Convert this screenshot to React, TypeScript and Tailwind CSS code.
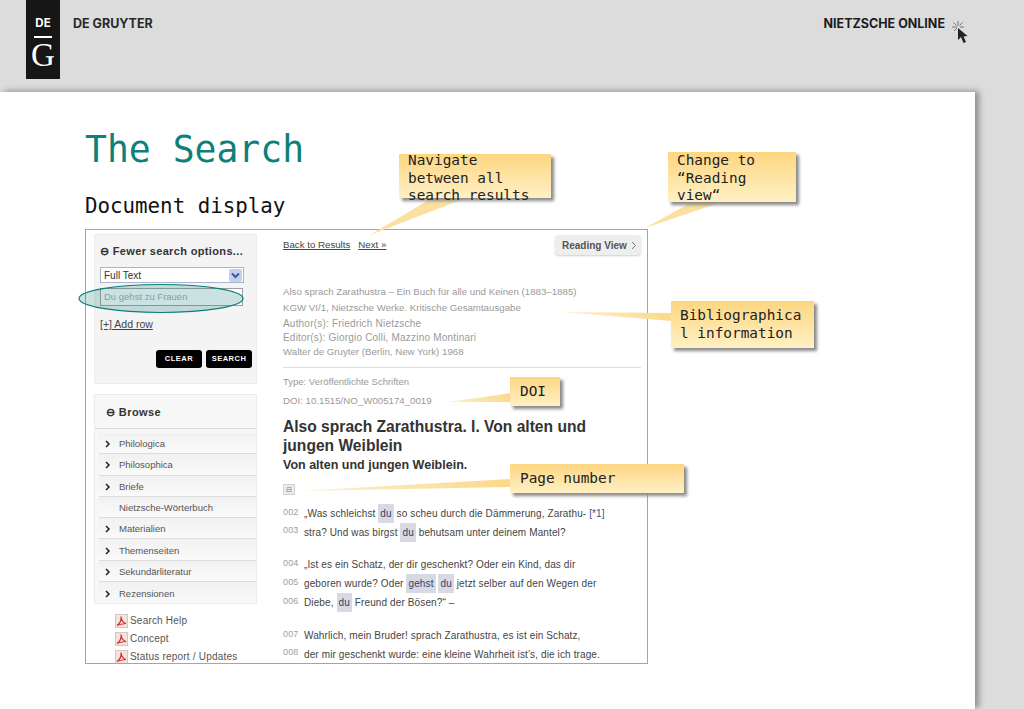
import type { ReactNode } from "react";

const browseItems = [
  { label: "Philologica", arrow: true },
  { label: "Philosophica", arrow: true },
  { label: "Briefe", arrow: true },
  { label: "Nietzsche-Wörterbuch", arrow: false },
  { label: "Materialien", arrow: true },
  { label: "Themenseiten", arrow: true },
  { label: "Sekundärliteratur", arrow: true },
  { label: "Rezensionen", arrow: true },
];

function Hit({ children }: { children: ReactNode }) {
  return <span className="inline-block h-[19px] bg-[#d9d9e4] px-[2px] leading-[19px] text-[#33406a]">{children}</span>;
}

function Line({ no, children }: { no: string; children: ReactNode }) {
  return (
    <div className="flex h-[18.8px] items-center">
      <span className="w-[21px] -translate-y-[1px] text-[9px] text-[#a0a0a0]">{no}</span>
      <span className="whitespace-nowrap">{children}</span>
    </div>
  );
}

function PdfIcon() {
  return (
    <svg width="13" height="14" viewBox="0 0 13 14" className="shrink-0">
      <rect x="0.5" y="0.5" width="12" height="13" fill="#f3e4e0" stroke="#d8c4c0" />
      <path d="M2 11.5 C5 9.5 6.5 6 6 2.5 C6.5 6 8 9 11 9.5 C8 9.5 5 10.5 2 11.5Z" fill="none" stroke="#d3332a" strokeWidth="1.2" />
    </svg>
  );
}

function Callout({ className, children }: { className: string; children: ReactNode }) {
  return (
    <div className={`absolute bg-gradient-to-b from-[#fdd680] to-[#fff0c4] font-['DejaVu_Sans_Mono',monospace] text-[14.4px] leading-[17.5px] text-[#222] shadow-[3px_3px_3px_#8a8a8a] ${className}`}>
      {children}
    </div>
  );
}

function Tail({ points }: { points: string }) {
  return <polygon points={points} fill="#fbe0a0" />;
}

export default function App() {
  return (
    <div className="relative h-[709px] w-[1024px] overflow-hidden bg-[#dcdcdc] font-['Liberation_Sans',Arial,sans-serif]">
      <header className="flex h-[92px] items-start justify-between pl-[26px] pr-[55px]">
        <div className="flex items-start">
          <div className="flex h-[79px] w-[34px] flex-col items-center bg-[#161616] pt-[17px] text-white">
            <span className="font-['Inter',sans-serif] text-[11.5px] font-bold leading-[13px]">DE</span>
            <span className="mt-[6px] h-[1.5px] w-[18px] bg-white" />
            <span className="mt-[2px] font-['Liberation_Serif',serif] text-[33px] leading-[30px]">G</span>
          </div>
          <span className="ml-[13px] mt-[16px] font-['Inter',sans-serif] text-[12.5px] font-bold leading-[16px] text-[#2a2a2a]">DE GRUYTER</span>
        </div>
        <div className="mt-[16px] flex items-start">
          <span className="font-['Inter',sans-serif] text-[12.5px] font-bold leading-[16px] text-[#1c1c1c]">NIETZSCHE ONLINE</span>
          <svg width="18" height="26" viewBox="0 0 18 26" className="ml-[6px] mt-[4px]">
            <path d="M7 1v5M1 7h5M2.5 2.5l3 3M11.500 2.500l-3 3M13 7H9M3 11l3-3" stroke="#777" strokeWidth="1" fill="none" />
            <path d="M7 8l0 12 3-3 2.500 6 2.500-1-2.500-5.500 4-.5z" fill="#222" />
          </svg>
        </div>
      </header>

      <main className="h-[617px] w-[975px] bg-white pl-[85px] pt-[38px] shadow-[4px_-1px_6px_#8f8f8f]">
        <h1 className="font-['DejaVu_Sans_Mono',monospace] text-[36.4px] font-normal leading-[40px] text-[#0e8079]">The Search</h1>
        <h2 className="mt-[24px] font-['DejaVu_Sans_Mono',monospace] text-[20.8px] leading-[24px] text-[#111]">Document display</h2>

        <section className="mt-[11px] flex h-[435px] w-[563px] gap-[26px] overflow-hidden border border-[#a5a5a5] bg-white pl-[8px] pt-[4px] text-[#444]">
          <aside className="w-[163px] shrink-0">
            <div className="h-[150px] border border-[#ececec] bg-[#f4f4f4] pl-[5px] pt-[9px]">
              <div className="text-[11px] font-bold leading-[14px] tracking-[0.35px] text-[#333]">⊖ Fewer search options...</div>
              <div className="mt-[9px] flex h-[16px] w-[144px] items-center justify-between border border-[#a8b4d0] bg-white pl-[3px] pr-[1px] text-[10px] text-[#333]">
                Full Text
                <span className="flex h-[13px] w-[13px] items-center justify-center rounded-[2px] bg-[#c3d0ee] text-[#3a5aa4]">
                  <svg width="9" height="7" viewBox="0 0 9 7"><path d="M1 1.500l3.500 3.500L8 1.500" fill="none" stroke="currentColor" strokeWidth="2" /></svg>
                </span>
              </div>
              <div className="mt-[5px] flex h-[18px] w-[143px] items-center border border-[#a0a0a0] bg-white pl-[3px] text-[9.5px] text-[#a8a8a8]">Du gehst zu Frauen</div>
              <div className="mt-[11px] text-[10.5px] leading-[14px] text-[#444] underline">[+] Add row</div>
              <div className="ml-[56px] mt-[19px] flex gap-[4px]">
                <span className="flex h-[18px] w-[46px] items-center justify-center rounded-[3px] bg-black text-[7.5px] font-bold tracking-[0.5px] text-white">CLEAR</span>
                <span className="flex h-[18px] w-[46px] items-center justify-center rounded-[3px] bg-black text-[7.5px] font-bold tracking-[0.5px] text-white">SEARCH</span>
              </div>
            </div>

            <div className="mt-[10px] h-[210px] border border-[#ececec] bg-[#f7f7f7]">
              <div className="flex h-[34px] items-center border-b border-[#d8d8d8] pl-[11px] pt-[1px] text-[11px] font-bold tracking-[0.4px] text-[#333]">⊖ Browse</div>
              <ul className="pl-[4px] pt-[4px]">
                {browseItems.map((item) => (
                  <li key={item.label} className="flex h-[21.3px] items-center border-b border-[#dcdcdc] bg-gradient-to-b from-[#f1f1f1] to-[#fafafa] pt-[2px] text-[9.5px] text-[#555] last:border-b-0">
                    <span className="w-[20px] pl-[6px]">
                      {item.arrow && (
                        <svg width="6" height="8" viewBox="0 0 6 8"><path d="M1 1l3 3-3 3" fill="none" stroke="#222" strokeWidth="1.500" /></svg>
                      )}
                    </span>
                    {item.label}
                  </li>
                ))}
              </ul>
            </div>

            <div className="ml-[21px] mt-[10px] flex flex-col gap-[4px] text-[10px] leading-[14px] tracking-[0.2px] text-[#555]">
              {["Search Help", "Concept", "Status report / Updates"].map((label) => (
                <div key={label} className="flex items-center gap-[2px]">
                  <PdfIcon />
                  {label}
                </div>
              ))}
            </div>
          </aside>

          <div className="w-[358px] shrink-0">
            <div className="flex h-[22px] items-center justify-between text-[9.7px] text-[#444]">
              <div className="flex gap-[8px] underline">
                <span>Back to Results</span>
                <span>Next »</span>
              </div>
              <span className="flex h-[20px] w-[86px] items-center justify-between rounded-[4px] bg-[#eeeeee] pl-[7px] pr-[4px] text-[10px] font-bold text-[#555] shadow-[0_1px_2px_#cfcfcf]">
                Reading View
                <svg width="6" height="9" viewBox="0 0 6 9"><path d="M1 1l3.500 3.500L1 8" fill="none" stroke="#777" /></svg>
              </span>
            </div>

            <div className="mt-[28px] text-[9.7px] text-[#9a9a9a]">
              <div className="leading-[16px]">Also sprach Zarathustra – Ein Buch für alle und Keinen (1883–1885)</div>
              <div className="leading-[16px]">KGW VI/1, Nietzsche Werke. Kritische Gesamtausgabe</div>
              <div className="mt-[1px] text-[10px] leading-[14px] tracking-[0.2px]">Author(s): Friedrich Nietzsche</div>
              <div className="text-[10px] leading-[14px] tracking-[0.2px]">Editor(s): Giorgio Colli, Mazzino Montinari</div>
              <div className="leading-[14px]">Walter de Gruyter (Berlin, New York) 1968</div>
            </div>

            <div className="mt-[8px] border-t border-[#dddddd] pt-[4px] text-[9.5px] leading-[19px] text-[#9a9a9a]">
              <div>Type: Veröffentlichte Schriften</div>
              <div className="text-[9.7px]">DOI: 10.1515/NO_W005174_0019</div>
            </div>

            <h3 className="mt-[7px] text-[15.6px] font-bold leading-[19px] text-[#333]">Also sprach Zarathustra. I. Von alten und jungen Weiblein</h3>
            <div className="mt-[2px] text-[12.5px] font-bold leading-[16px] text-[#333]">Von alten und jungen Weiblein.</div>

            <div className="mt-[11px] flex h-[11px] w-[12px] items-center justify-center border border-[#d0d0d0] bg-[#ececec] text-[7px] leading-none text-[#777]">⊟</div>

            <div className="mt-[9px] text-[10px] tracking-[0.12px] text-[#444]">
              <Line no="002">„Was schleichst <Hit>du</Hit> so scheu durch die Dämmerung, Zarathu- <span className="text-[#33509a]">[*1]</span></Line>
              <Line no="003">stra? Und was birgst <Hit>du</Hit> behutsam unter deinem Mantel?</Line>
              <div className="h-[14px]" />
              <Line no="004">„Ist es ein Schatz, der dir geschenkt? Oder ein Kind, das dir</Line>
              <Line no="005">geboren wurde? Oder <Hit>gehst</Hit> <Hit>du</Hit> jetzt selber auf den Wegen der</Line>
              <Line no="006">Diebe, <Hit>du</Hit> Freund der Bösen?“ –</Line>
              <div className="h-[14px]" />
              <Line no="007">Wahrlich, mein Bruder! sprach Zarathustra, es ist ein Schatz,</Line>
              <Line no="008">der mir geschenkt wurde: eine kleine Wahrheit ist’s, die ich trage.</Line>
            </div>
          </div>
        </section>
      </main>

      {/* annotations on top of the slide */}
      <svg width="1024" height="709" className="pointer-events-none absolute inset-0">
        <defs>
          <linearGradient id="fade" x1="1" y1="0" x2="0" y2="0">
            <stop offset="0" stopColor="#fbd98a" />
            <stop offset="1" stopColor="#fdf0d0" />
          </linearGradient>
        </defs>
        <Tail points="432,198 466,198 370,235" />
        <Tail points="692,202 722,202 645,228" />
        <polygon points="672,313 672,321 562,312" fill="url(#fade)" />
        <polygon points="511,393 511,402 448,402" fill="url(#fade)" />
        <polygon points="511,479 511,487 300,491" fill="url(#fade)" />
        <ellipse cx="161" cy="298.500" rx="82" ry="14" fill="#0e8079" fillOpacity="0.22" stroke="#0e7f78" strokeWidth="1.200" />
      </svg>

      <Callout className="left-[399px] top-[154px] h-[44px] w-[152px] pl-[9px]">
        <div className="-mt-[2px]">Navigate<br />between all<br />search results</div>
      </Callout>
      <Callout className="left-[668px] top-[152px] h-[50px] w-[128px] pl-[9px]">Change to<br />“Reading<br />view“</Callout>
      <Callout className="left-[671px] top-[301px] h-[47px] w-[143px] pl-[9px] pt-[6px]">Bibliographica<br />l information</Callout>
      <Callout className="left-[510px] top-[377px] h-[29px] w-[50px] pl-[10px] pt-[6px]">DOI</Callout>
      <Callout className="left-[510px] top-[464px] h-[29px] w-[174px] pl-[10px] pt-[6px]">Page number</Callout>
    </div>
  );
}
